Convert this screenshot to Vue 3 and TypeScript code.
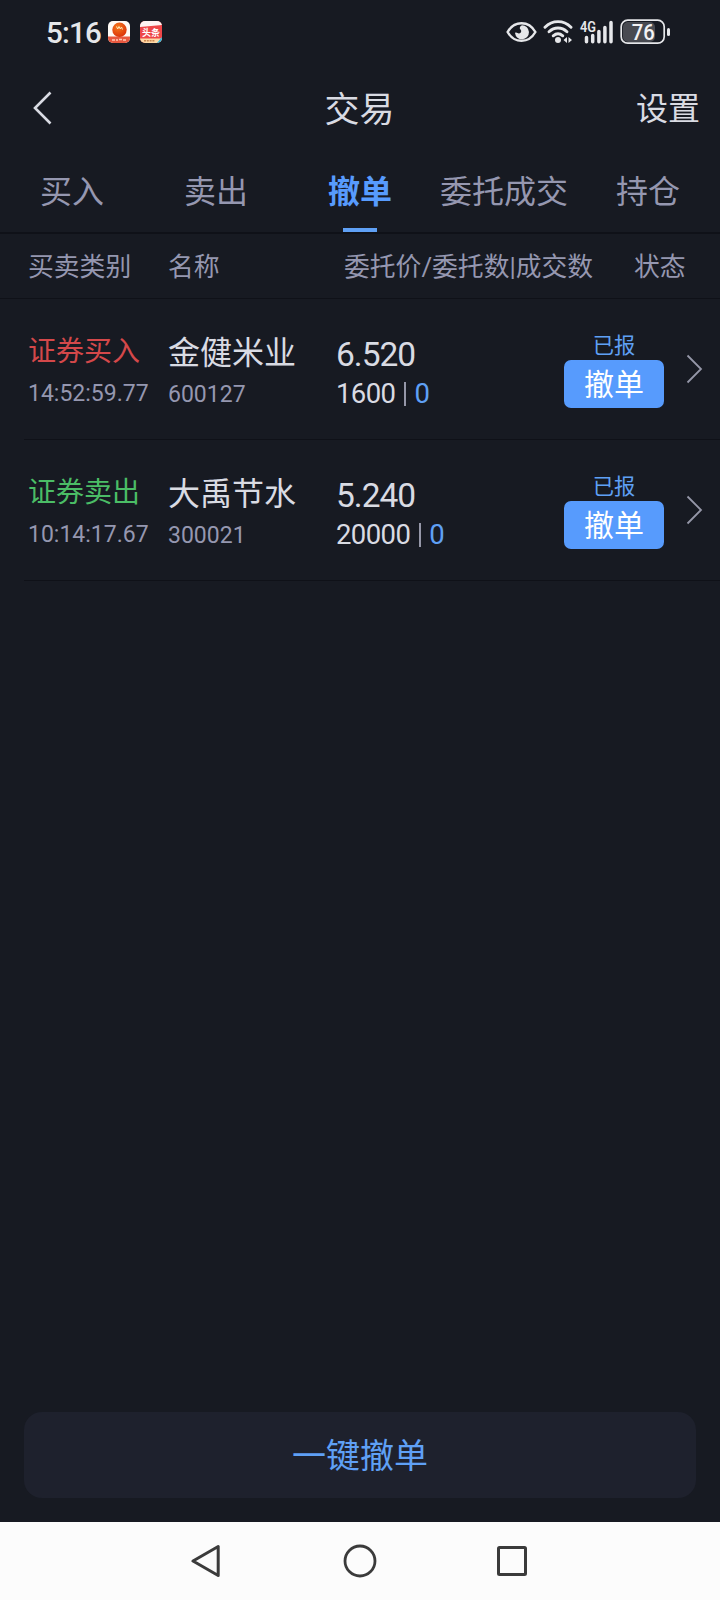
<script setup lang="ts">
interface Order {
  side: 'buy' | 'sell'
  label: string
  time: string
  name: string
  code: string
  price: string
  amount: string
  filled: string
}

const tabs: string[] = ['买入', '卖出', '撤单', '委托成交', '持仓']
const activeTab = 2

const orders: Order[] = [
  { side: 'buy', label: '证券买入', time: '14:52:59.77', name: '金健米业', code: '600127', price: '6.520', amount: '1600', filled: '0' },
  { side: 'sell', label: '证券卖出', time: '10:14:17.67', name: '大禹节水', code: '300021', price: '5.240', amount: '20000', filled: '0' },
]
</script>

<template>
  <div class="screen">
    <div class="status">
      <span class="clock">5:16</span>
      <svg class="app-icon" width="22" height="22" viewBox="0 0 22 22">
        <defs>
          <clipPath id="appA"><rect width="22" height="22" rx="5" /></clipPath>
          <radialGradient id="ball" cx="0.4" cy="0.3" r="0.8">
            <stop offset="0" stop-color="#f57a1c" />
            <stop offset="1" stop-color="#d92a08" />
          </radialGradient>
        </defs>
        <g clip-path="url(#appA)">
          <rect width="22" height="22" fill="#fffaf5" />
          <rect y="15.500" width="22" height="7" fill="#e8583f" />
          <circle cx="11.500" cy="8.800" r="7.200" fill="url(#ball)" />
          <path d="M8.500 5.500l1.200 2.500L11 5.500l1.300 2.500L13.500 6l1 2.500" fill="none" stroke="#ffe6b8" stroke-width="1" />
          <path d="M4 19h3M8 19h2M11 18.500h3M15 19h3" stroke="#ffc9b8" stroke-width="1.600" />
        </g>
      </svg>
      <svg class="app-icon second" width="22" height="22" viewBox="0 0 22 22">
        <defs><clipPath id="appB"><rect width="22" height="22" rx="5" /></clipPath></defs>
        <g clip-path="url(#appB)">
          <rect width="22" height="22" fill="#ee4648" />
          <path d="M0 0h22v4L0 6z" fill="#fdf3f2" />
          <rect y="17.500" width="22" height="5" fill="#ffd9a6" />
          <path d="M17 22l5-6v6z" fill="#2fb7e0" />
          <path d="M4 19.800h11" stroke="#c98650" stroke-width="1.500" stroke-dasharray="2 .8" />
          <text x="11" y="15" text-anchor="middle" class="app-text">头条</text>
        </g>
      </svg>
      <div class="indicators">
        <svg width="31" height="22" viewBox="0 0 31 22">
          <path d="M1.600 11C5 5 10 2.200 15.500 2.200S26 5 29.400 11C26 17 21 19.800 15.500 19.800S5 17 1.600 11z" fill="none" stroke="#e6e7ea" stroke-width="2.400" />
          <path d="M16 4.300A7 7 0 1 1 9 12c.8-.9 1.800-.4 2.500.1 1.800.9 4-.3 3.700-2.300-.2-1.300-1.700-1.500-1.400-3 .2-1.200 1-2.100 2.200-2.500z" fill="#e6e7ea" />
        </svg>
        <svg class="wifi" width="31" height="24" viewBox="0 0 31 24">
          <g fill="none" stroke="#e6e7ea" stroke-width="2.900" stroke-linecap="round">
            <path d="M2 7.200C9.500-.2 20.500-.2 28 7.200" />
            <path d="M6 11.800c5.300-5 12.700-5 18 0" />
            <path d="M10.200 15.800c3-2.500 6.600-2.500 9.600 0" />
          </g>
          <circle cx="15" cy="20" r="3" fill="#e6e7ea" />
          <path d="M24 17v6l-3.500-3zM25.500 17v6l3.500-3z" fill="#e6e7ea" />
        </svg>
        <svg class="signal" width="35" height="34" viewBox="-1 -5 35 34">
          <text x="0" y="11.800" textLength="16" lengthAdjust="spacingAndGlyphs" class="net">4G</text>
          <path d="M6.500 17.500v4.200M12.700 15.500v6.200M18.900 11.500v10.200M24.900 7.500v14.200M31 2.500v19.200" stroke="#e6e7ea" stroke-width="3.500" stroke-linecap="round" />
        </svg>
        <svg class="battery" width="52" height="26" viewBox="0 0 52 26">
          <rect x="3" y="3" width="32" height="20" rx="5" fill="#484a51" />
          <rect x="1.200" y="1.200" width="43" height="23" rx="6.500" fill="none" stroke="#e6e7ea" stroke-width="1.700" />
          <path d="M48.500 10.500v5" stroke="#e6e7ea" stroke-width="3" stroke-linecap="round" />
          <text x="23.300" y="20.800" text-anchor="middle" textLength="23" lengthAdjust="spacingAndGlyphs" class="level">76</text>
        </svg>
      </div>
    </div>

    <header class="header">
      <svg class="back" width="22" height="36" viewBox="0 0 22 36">
        <path d="M18.500 2.500L3 18l15.500 15.500" fill="none" stroke="#d9dbe3" stroke-width="2.600" />
      </svg>
      <h1 class="title">交易</h1>
      <span class="settings">设置</span>
    </header>

    <nav class="tabs">
      <span v-for="(tab, i) in tabs" :key="tab" class="tab" :class="{ active: i === activeTab }">{{ tab }}</span>
    </nav>

    <div class="columns">
      <span class="c-side">买卖类别</span>
      <span class="c-name">名称</span>
      <span class="c-price">委托价/委托数|成交数</span>
      <span class="c-state">状态</span>
    </div>

    <main class="list">
      <section v-for="order in orders" :key="order.code" class="order">
        <div class="col side">
          <span class="label" :class="order.side">{{ order.label }}</span>
          <span class="minor">{{ order.time }}</span>
        </div>
        <div class="col name">
          <span class="stock">{{ order.name }}</span>
          <span class="minor">{{ order.code }}</span>
        </div>
        <div class="col quote">
          <span class="price">{{ order.price }}</span>
          <span class="qty">{{ order.amount }}<i class="bar"></i><b class="filled">{{ order.filled }}</b></span>
        </div>
        <div class="action">
          <span class="state">已报</span>
          <button class="cancel">撤单</button>
        </div>
        <svg class="more" width="18" height="32" viewBox="0 0 18 32">
          <path d="M1.500 2.500L15 16 1.500 29.500" fill="none" stroke="#9597a8" stroke-width="1.800" />
        </svg>
      </section>
    </main>

    <button class="cancel-all">一键撤单</button>

    <footer class="sysnav">
      <svg width="34" height="38" viewBox="0 0 34 38">
        <path d="M2 19L27.200 4.500v29z" fill="none" stroke="#3b3b3b" stroke-width="3" stroke-linejoin="round" />
      </svg>
      <svg width="34" height="38" viewBox="0 0 34 38">
        <circle cx="17" cy="19" r="15" fill="none" stroke="#3b3b3b" stroke-width="2.800" />
      </svg>
      <svg width="34" height="38" viewBox="0 0 34 38">
        <rect x="3.500" y="5.500" width="27" height="27" rx="1" fill="none" stroke="#3b3b3b" stroke-width="3" />
      </svg>
    </footer>
  </div>
</template>

<style>
body {
  margin: 0;
  background: #171a22;
}
</style>

<style scoped>
.screen {
  width: 720px;
  height: 1600px;
  display: flex;
  flex-direction: column;
  background: #171a22;
  color: #d9dbe3;
  font-family: Roboto, "Noto Sans CJK SC", sans-serif;
  overflow: hidden;
}
button {
  border: 0;
  padding: 0;
  font-family: inherit;
}
.status {
  height: 64px;
  box-sizing: border-box;
  display: flex;
  align-items: center;
  padding: 0 48px 0 46px;
}
.clock {
  width: 62px;
  font-size: 29.5px;
  line-height: 34px;
  letter-spacing: -0.8px;
  font-weight: 500;
  color: #e6e7ea;
  padding-top: 2px;
}
.app-icon.second {
  margin-left: 10px;
}
.app-text {
  font-size: 9px;
  font-weight: 700;
  fill: #fff;
}
.indicators {
  margin-left: auto;
  display: flex;
  align-items: center;
}
.wifi { margin-left: 6px; }
.signal { margin-left: 5px; }
.battery { margin-left: 6px; }
.net {
  font-size: 15.5px;
  font-weight: 600;
  fill: #e6e7ea;
}
.level {
  font-size: 22.5px;
  font-weight: 500;
  fill: #f2f2f4;
}
.header {
  height: 88px;
  display: grid;
  grid-template-columns: 1fr auto 1fr;
  align-items: center;
  padding: 0 20px 0 32px;
}
.title {
  margin: 0 13px 0 0;
  font-size: 35px;
  line-height: 40px;
  font-weight: 400;
  padding-top: 5px;
}
.settings {
  justify-self: end;
  font-size: 32px;
  line-height: 40px;
  padding-top: 2px;
}
.tabs {
  height: 80px;
  display: flex;
  border-bottom: 2px solid #0f1118;
}
.tab {
  flex: 1;
  display: flex;
  justify-content: center;
  position: relative;
  font-size: 32px;
  line-height: 80px;
  color: #9597b0;
}
.tab.active {
  color: #579bfd;
  font-weight: 700;
}
.tab.active::after {
  content: "";
  position: absolute;
  left: 55px;
  bottom: 0;
  width: 34px;
  height: 4px;
  background: #5fa0f5;
}
.columns {
  height: 65px;
  box-sizing: border-box;
  display: flex;
  padding-left: 28px;
  border-bottom: 1px solid #0f1118;
  font-size: 25.8px;
  line-height: 66px;
  color: #9597b0;
  white-space: nowrap;
}
.c-side { width: 140px; }
.c-name { width: 176px; }
.c-price { width: 290px; }
.list {
  flex: 1;
}
.order {
  height: 141px;
  box-sizing: border-box;
  display: flex;
  margin-left: 24px;
  padding-left: 4px;
  border-bottom: 1px solid #0f1118;
}
.col {
  display: flex;
  flex-direction: column;
}
.side { width: 140px; padding-top: 32px; }
.name { width: 168px; padding-top: 33px; }
.quote { width: 228px; padding-top: 36px; }
.label {
  font-size: 28px;
  line-height: 42px;
}
.buy { color: #d4484a; }
.sell { color: #4bbd66; }
.minor {
  font-size: 23px;
  line-height: 42px;
  color: #9597b0;
}
.stock {
  font-size: 32px;
  line-height: 42px;
}
.price {
  font-size: 33.5px;
  line-height: 40px;
  letter-spacing: -1px;
}
.qty {
  display: flex;
  align-items: center;
  font-size: 27.5px;
  line-height: 38px;
  letter-spacing: -0.6px;
}
.bar {
  width: 2px;
  height: 24px;
  margin: 0 8px 0 9px;
  background: #9597a8;
}
.filled {
  font-weight: 400;
  color: #5fa0f5;
}
.action {
  width: 100px;
  display: flex;
  flex-direction: column;
  align-items: center;
  padding-top: 33px;
}
.state {
  font-size: 21.3px;
  line-height: 28px;
  color: #5fa0f5;
}
.cancel {
  width: 100px;
  height: 48px;
  border-radius: 7px;
  background: #579bfd;
  color: #fff;
  font-size: 30px;
  line-height: 49px;
}
.more {
  margin: 54px 0 0 22px;
}
.cancel-all {
  height: 86px;
  margin: 0 24px 24px;
  border-radius: 18px;
  background: #1e212d;
  color: #5fa0f5;
  font-size: 34px;
  line-height: 86px;
  padding-top: 1px;
}
.sysnav {
  height: 78px;
  display: flex;
  justify-content: center;
  align-items: center;
  gap: 118px;
  background: #fcfcfc;
}
</style>
